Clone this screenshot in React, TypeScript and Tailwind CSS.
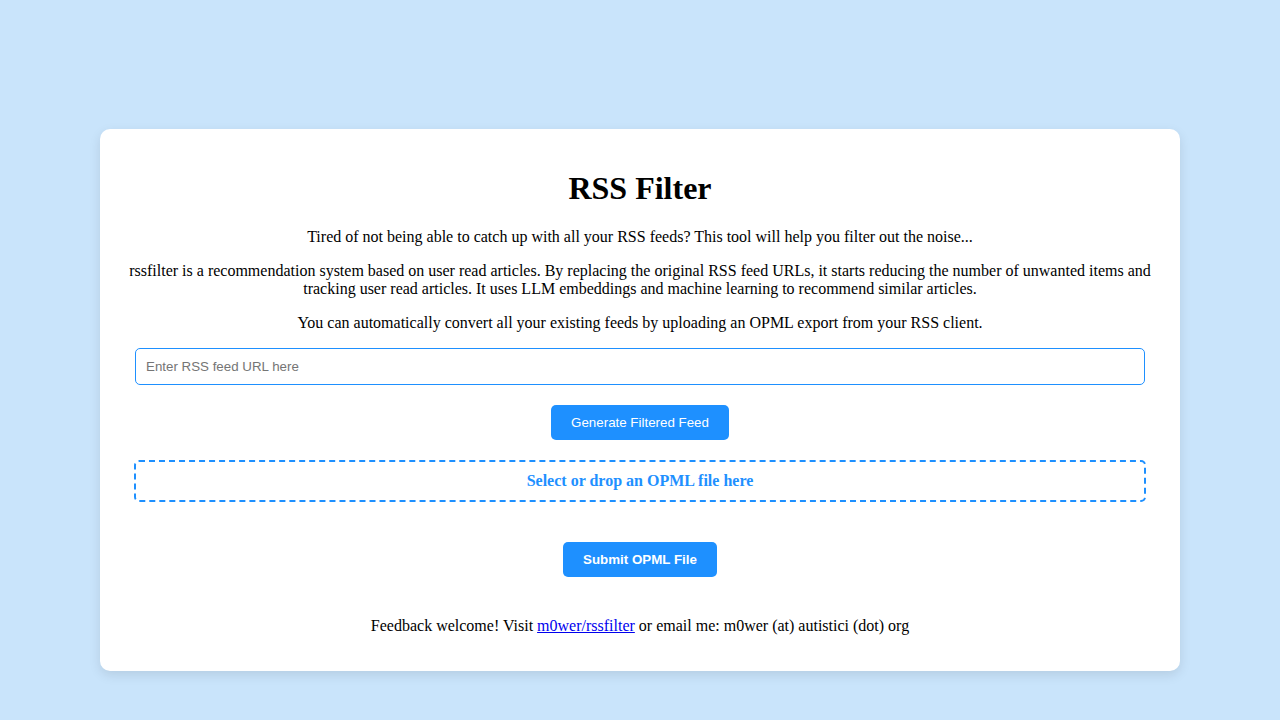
export default function App() {
  return (
    <div className="min-h-screen bg-[#c9e4fb] flex justify-center pt-[129px] font-['Liberation_Serif',serif] text-black">
      <div className="w-[1080px] h-fit bg-white rounded-[10px] shadow-[0_4px_12px_rgba(0,0,0,0.1)] px-[29px] pt-5 pb-[19px] text-center">
        <h1 className="text-[32px] font-bold leading-[37px] my-[21px]">RSS Filter</h1>
        <p className="text-base leading-[18.5px] mb-[15px]">
          Tired of not being able to catch up with all your RSS feeds? This tool will help you filter out the noise...
        </p>
        <p className="text-base leading-[18px] mb-4">
          rssfilter is a recommendation system based on user read articles. By replacing the original RSS feed URLs, it starts reducing the number of unwanted items and tracking user read articles. It uses LLM embeddings and machine learning to recommend similar articles.
        </p>
        <p className="text-base leading-[18.5px] mb-4">
          You can automatically convert all your existing feeds by uploading an OPML export from your RSS client.
        </p>
        <div className="px-[6px]">
          <input
            type="text"
            placeholder="Enter RSS feed URL here"
            className="block w-full h-[37px] px-[10px] border border-[#1e90ff] rounded-[5px] font-['Liberation_Sans',Arial,sans-serif] text-[13.33px] placeholder:text-[#757575] outline-none"
          />
        </div>
        <button className="mt-5 h-[35px] px-5 bg-[#1e90ff] text-white rounded-[5px] font-['Liberation_Sans',Arial,sans-serif] text-[13.33px]">
          Generate Filtered Feed
        </button>
        <div className="mx-[5px] mt-5 h-[42px] border-2 border-dashed border-[#1e90ff] rounded-[5px] flex items-center justify-center text-[#1e90ff] font-bold text-base">
          Select or drop an OPML file here
        </div>
        <button className="mt-10 h-[35px] px-5 bg-[#1e90ff] text-white rounded-[5px] font-['Liberation_Sans',Arial,sans-serif] text-[13.33px] font-bold">
          Submit OPML File
        </button>
        <p className="text-base leading-[18.5px] mt-10 mb-4">
          Feedback welcome! Visit{" "}
          <a href="#" className="text-[#0000ee] underline">m0wer/rssfilter</a>{" "}
          or email me: m0wer (at) autistici (dot) org
        </p>
      </div>
    </div>
  );
}
